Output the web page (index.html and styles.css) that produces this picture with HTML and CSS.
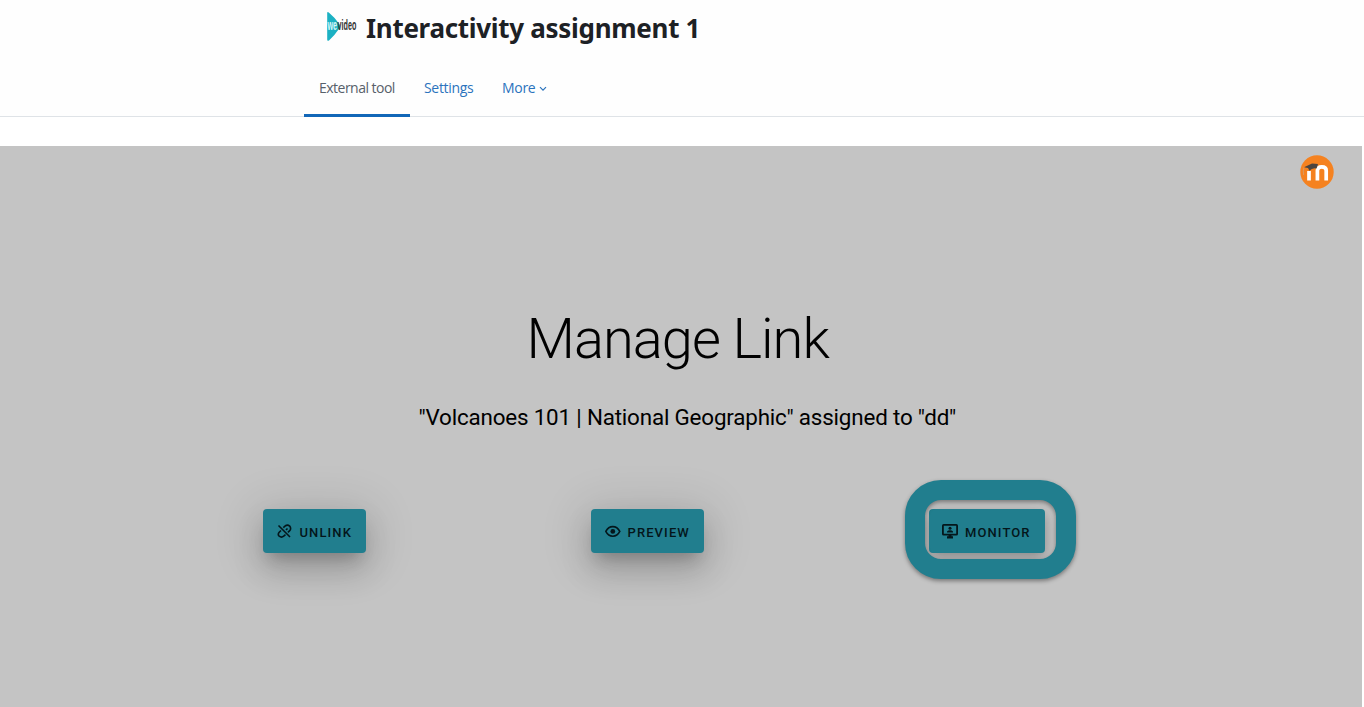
FILE: index.html
```html
<!DOCTYPE html>
<html lang="en">
<head>
<meta charset="utf-8">
<title>Interactivity assignment 1</title>
<link rel="stylesheet" href="styles.css">
</head>
<body>
<header class="header">
  <div class="title-row">
    <svg class="logo" width="32" height="32" viewBox="0 0 32 32">
      <path d="M1.2 2Q1.2 .5 2.8 1.4Q9 6.4 13.6 13.4Q14.8 15.2 13.6 17Q9 24 3 29.4Q1.2 30.6 1.2 28.6Z" fill="#1cb1c3"/>
      <g class="logo-text" transform="translate(1.5 19.4) scale(.48 1)"><text class="logo-we">we</text><text class="logo-video" x="21">video</text></g>
    </svg>
    <h1 class="title">Interactivity assignment 1</h1>
  </div>
  <nav class="tabs">
    <a class="tab tab-active"><span class="tab-external">External tool</span></a>
    <a class="tab tab-settings">Settings</a>
    <a class="tab tab-more">More
      <svg class="chevron" width="8" height="6" viewBox="0 0 8 6"><path d="M1 1.2L4 4.2L7 1.2" fill="none" stroke="currentColor" stroke-width="1.2"/></svg>
    </a>
  </nav>
</header>
<main class="panel">
  <svg class="moodle" width="34" height="34" viewBox="0 0 34 34">
    <circle cx="17" cy="17" r="16.7" fill="#f58220"/>
    <path d="M9 25.5V16M17.4 25.5V15.5Q17.4 11.8 21.8 11.8Q26.2 11.8 26.2 15.5V25.5" fill="none" stroke="#fff" stroke-width="3.7"/>
    <path d="M4 12.2L12 8.4L18 9L16.6 13.6Q12.5 12.4 9.4 15.8L8 13Z" fill="#4b4540"/>
    <path d="M4 12.4Q2.8 15.5 3.6 20" fill="none" stroke="#d4a171" stroke-width=".8"/>
  </svg>
  <h2 class="heading">Manage Link</h2>
  <p class="subtitle">"Volcanoes 101 | National Geographic" assigned to "dd"</p>
  <div class="actions">
    <button class="button button-unlink">
      <svg class="icon" width="16" height="16" viewBox="0 0 16 16" fill="none" stroke="currentColor" stroke-width="1.6">
        <path d="M1.5 2.5L13 14M6.3 4.7L8.1 3Q10.5 1.2 12.7 3.1Q14.5 5.5 12.7 7.7L10.9 9.3M4 7.5L2.2 9.3Q.4 11.5 2.2 13.2Q4.5 15 6.7 13.2L8.5 11.7M9 7L10.5 5.5"/>
      </svg>
      <span>UNLINK</span>
    </button>
    <button class="button button-preview">
      <svg class="icon" width="16" height="16" viewBox="0 0 16 16" fill="none" stroke="currentColor" stroke-width="1.6">
        <path d="M.8 8.4Q3.3 3.6 7.8 3.6T14.8 8.4Q12.3 13.2 7.8 13.2T.8 8.4Z"/>
        <circle cx="7.8" cy="8.4" r="2.4" fill="currentColor" stroke="none"/>
      </svg>
      <span>PREVIEW</span>
    </button>
    <div class="monitor">
      <button class="button button-monitor">
        <svg class="icon" width="16" height="16" viewBox="0 0 16 16" fill="currentColor">
          <rect x=".9" y="1.9" width="14.2" height="9.8" rx=".8" fill="none" stroke="currentColor" stroke-width="1.8"/>
          <path d="M6.5 12H9.5V13.2H11V15.4H5V13.2H6.5Z"/>
          <circle cx="8" cy="5.2" r="1.5"/>
          <path d="M5 9.6V8.6Q6 7.2 8 7.2T11 8.6V9.6Z"/>
        </svg>
        <span>MONITOR</span>
      </button>
      <div class="ring"></div>
    </div>
  </div>
</main>
</body>
</html>
```
FILE: styles.css
```css
* { box-sizing: border-box; }
body {
  margin: 0;
  height: 707px;
  overflow: hidden;
  background: #fff;
  font-family: "Open Sans", "Noto Sans", sans-serif;
}
.header {
  height: 117px;
  display: flex;
  flex-direction: column;
  justify-content: space-between;
  background: #fefefe;
  border-bottom: 1px solid #dfe3e7;
}
.title-row {
  display: flex;
  align-items: flex-start;
  gap: 8px;
  padding: 11px 0 0 326px;
}
.logo { flex: none; }
.logo-text { font-family: "Liberation Sans", sans-serif; font-size: 15px; font-weight: bold; }
.logo-we { fill: #d9f6f8; }
.logo-video { fill: #333; }
.title {
  margin: 0;
  font-family: "Noto Sans", sans-serif;
  font-size: 26px;
  font-weight: 700;
  line-height: 34px;
  letter-spacing: -0.3px;
  color: #1d2125;
  white-space: nowrap;
}
.tabs {
  display: flex;
  height: 56px;
  margin: 0 0 -1px 304px;
  font-size: 14px;
  line-height: 20px;
  color: #2b73bd;
}
.tab { padding-top: 17px; white-space: nowrap; }
.tab-active {
  width: 106px;
  padding-left: 15px;
  border-bottom: 3px solid #1267b8;
  color: #57606a;
}
.tab-external { letter-spacing: -0.52px; }
.tab-settings { width: 78px; margin-left: 14px; letter-spacing: -0.33px; }
.tab-more { letter-spacing: -0.3px; }
.chevron { vertical-align: 1px; }
.panel {
  position: relative;
  width: 1362px;
  height: 561px;
  margin-top: 29px;
  padding-top: 157px;
  background: #c4c4c4;
  font-family: Roboto, sans-serif;
  color: #000;
}
.moodle { position: absolute; right: 28px; top: 9px; }
.heading {
  margin: 0 0 0 526.5px;
  font-size: 56px;
  font-weight: 300;
  line-height: 72px;
  letter-spacing: -1px;
  white-space: nowrap;
}
.subtitle {
  margin: 26px 0 0 418.5px;
  font-size: 22.4px;
  line-height: 32px;
  letter-spacing: -0.18px;
  white-space: nowrap;
}
.actions {
  display: flex;
  gap: 225px;
  margin-top: 76px;
  padding-left: 263px;
}
.button {
  display: flex;
  align-items: center;
  gap: 7px;
  height: 44px;
  padding: 0 0 0 13.5px;
  border: 0;
  border-radius: 4px;
  background: #217e8e;
  color: #04161b;
  font: 500 13px/16px Roboto, sans-serif;
  letter-spacing: 1.1px;
  box-shadow: 0 11px 15px -7px rgba(0,0,0,.2), 0 18px 30px 2px rgba(0,0,0,.13), 0 5px 46px 8px rgba(0,0,0,.12);
}
.button span { padding-top: 3px; }
.icon { flex: none; }
.button-unlink { width: 103px; }
.button-preview { width: 113px; }
.monitor { position: relative; }
.button-monitor { width: 116px; padding-left: 13px; box-shadow: 0 5px 14px rgba(0,0,0,.3); }
.ring {
  position: absolute;
  left: -24px;
  top: -29px;
  width: 171px;
  height: 99px;
  border: 20.5px solid #217e8e;
  border-radius: 36px;
  filter: drop-shadow(0 2px 2px rgba(0,0,0,.4));
}
```
